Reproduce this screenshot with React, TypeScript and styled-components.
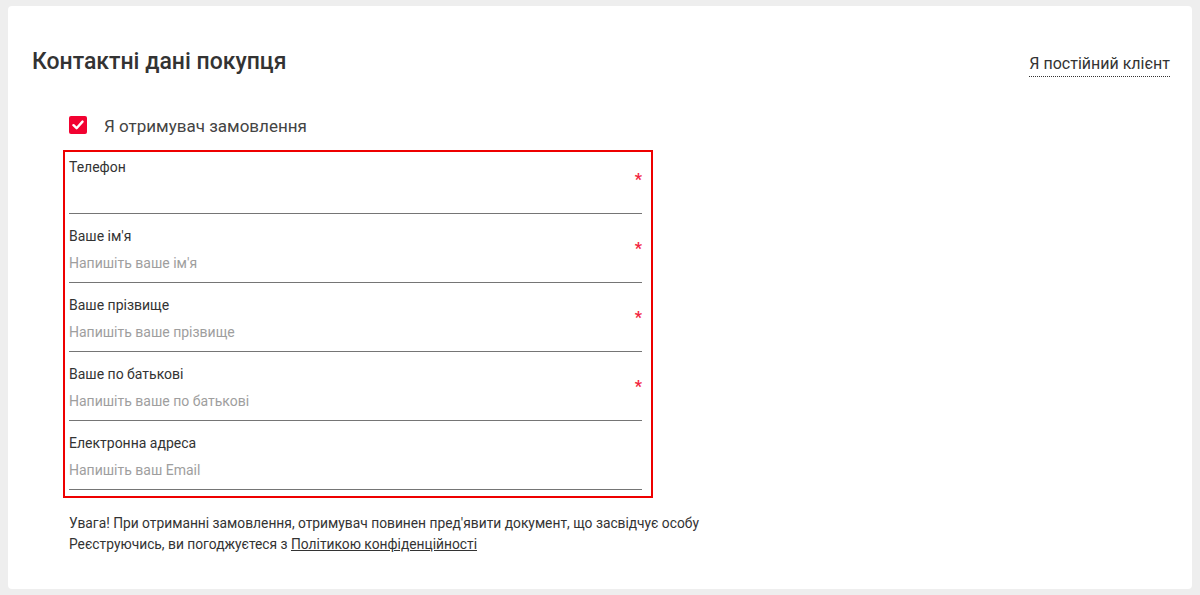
import React, { useState } from "react";
import styled, { createGlobalStyle } from "styled-components";

const GlobalStyle = createGlobalStyle`
  html, body {
    margin: 0;
    padding: 0;
    background: #eeeeee;
  }
  body {
    font-family: Roboto, "Noto Sans", Arial, sans-serif;
    color: #333;
  }
  * {
    box-sizing: border-box;
  }
`;

const Page = styled.div`
  padding: 6px 8px 6px 8px;
`;

const Card = styled.section`
  background: #fff;
  border-radius: 4px;
  height: 583px;
  padding: 42px 22px 0 24px;
`;

const Header = styled.div`
  display: flex;
  justify-content: space-between;
  align-items: flex-start;
`;

const Title = styled.h2`
  margin: 0;
  font-size: 23px;
  line-height: 28px;
  font-weight: 500;
  color: #333;
`;

const RegularLink = styled.a`
  margin-top: 7px;
  font-size: 16px;
  line-height: 18px;
  color: #333;
  text-decoration: none;
  padding-bottom: 3px;
  border-bottom: 1px dotted #333;
  cursor: pointer;
`;

const Form = styled.div`
  margin: 37px 0 0 37px;
  width: 573px;
`;

const CheckRow = styled.label`
  display: flex;
  align-items: center;
  gap: 17px;
  height: 24px;
  cursor: pointer;
`;

const Box = styled.span<{ $checked: boolean }>`
  width: 18px;
  height: 18px;
  border-radius: 2px;
  margin-top: -2px;
  background: ${({ $checked }) => ($checked ? "#f20231" : "#fff")};
  border: ${({ $checked }) => ($checked ? "none" : "1px solid #999")};
  display: flex;
  align-items: center;
  justify-content: center;
`;

const CheckText = styled.span`
  font-size: 17px;
  line-height: 24px;
  color: #444;
`;

const Highlight = styled.div`
  margin: 12px 0 0 -6px;
  width: 590px;
  border: 2px solid #ee0000;
  padding: 0 9px 6px 4px;
`;

const Field = styled.div<{ $first?: boolean }>`
  position: relative;
  padding: ${({ $first }) => ($first ? "5px" : "12px")} 0 9px 0;
  border-bottom: 1px solid #757575;
  display: flex;
  flex-direction: column;
  gap: 7px;
`;

const Label = styled.div`
  font-size: 14px;
  line-height: 20px;
  color: #333;
`;

const Input = styled.input`
  border: none;
  outline: none;
  padding: 0;
  margin: 0;
  height: 20px;
  width: 100%;
  font-family: Roboto, "Noto Sans", Arial, sans-serif;
  font-size: 14px;
  line-height: 20px;
  color: #333;
  background: transparent;

  &::placeholder {
    color: #9e9e9e;
  }
`;

const Required = styled.span`
  position: absolute;
  right: 0;
  bottom: 25px;
  font-size: 16px;
  line-height: 16px;
  color: #f2263f;
  font-weight: 700;
`;

const Notes = styled.div`
  margin-top: 15px;
  font-size: 13.8px;
  line-height: 21px;
  color: #333;
  white-space: nowrap;
`;

const PolicyLink = styled.a`
  color: #333;
  text-decoration: underline;
  cursor: pointer;
`;

type FieldDef = {
  label: string;
  placeholder: string;
  required: boolean;
};

const fields: FieldDef[] = [
  { label: "Телефон", placeholder: "", required: true },
  { label: "Ваше ім'я", placeholder: "Напишіть ваше ім'я", required: true },
  { label: "Ваше прізвище", placeholder: "Напишіть ваше прізвище", required: true },
  { label: "Ваше по батькові", placeholder: "Напишіть ваше по батькові", required: true },
  { label: "Електронна адреса", placeholder: "Напишіть ваш Email", required: false },
];

const CheckMark = () => (
  <svg width="12" height="10" viewBox="0 0 12 10" fill="none">
    <path d="M1.5 5.2 L4.6 8.2 L10.5 1.6" stroke="#fff" strokeWidth="2.4" strokeLinecap="round" strokeLinejoin="round" />
  </svg>
);

export default function App() {
  const [isRecipient, setRecipient] = useState(true);

  return (
    <>
      <GlobalStyle />
      <Page>
        <Card>
          <Header>
            <Title>Контактні дані покупця</Title>
            <RegularLink>Я постійний клієнт</RegularLink>
          </Header>
          <Form>
            <CheckRow onClick={() => setRecipient(!isRecipient)}>
              <Box $checked={isRecipient}>{isRecipient && <CheckMark />}</Box>
              <CheckText>Я отримувач замовлення</CheckText>
            </CheckRow>
            <Highlight>
              {fields.map((f, i) => (
                <Field key={f.label} $first={i === 0}>
                  <Label>{f.label}</Label>
                  <Input placeholder={f.placeholder} />
                  {f.required && <Required>*</Required>}
                </Field>
              ))}
            </Highlight>
            <Notes>
              Увага! При отриманні замовлення, отримувач повинен пред'явити документ, що засвідчує особу
              <br />
              Реєструючись, ви погоджуєтеся з <PolicyLink>Політикою конфіденційності</PolicyLink>
            </Notes>
          </Form>
        </Card>
      </Page>
    </>
  );
}
